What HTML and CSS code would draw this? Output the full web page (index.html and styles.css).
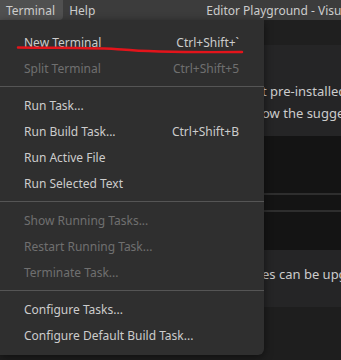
FILE: index.html
```html
<!DOCTYPE html>
<html lang="en">
<head>
  <meta charset="UTF-8" />
  <meta name="viewport" content="width=device-width, initial-scale=1.0" />
  <title>Editor Playground</title>
  <link rel="stylesheet" href="styles.css">
</head>
<body>
  <header class="titlebar">
    <nav class="menubar">
      <span class="menubar-item active">Terminal</span>
      <span class="menubar-item">Help</span>
    </nav>
    <span class="window-title">Editor Playground - Visual Studio Code</span>
  </header>

  <main class="editor">
    <div class="band band-top"></div>
    <section class="band band-panel panel-intro">
      <p class="line">t pre-installed.</p>
      <p class="line">ow the suggestions</p>
    </section>
    <div class="band band-dark band-a"></div>
    <div class="band band-rule"></div>
    <div class="band band-dark band-b"></div>
    <div class="band band-rule"></div>
    <div class="band band-dark band-c"></div>
    <section class="band band-panel panel-outro">
      <p class="line">es can be upgraded</p>
    </section>
    <div class="band band-bottom"></div>
  </main>

  <!-- dropdown of the Terminal menu, lies over the editor -->
  <div class="menu">
    <div class="menu-item">
      <span class="label">New Terminal</span><span class="keys">Ctrl+Shift+`</span>
    </div>
    <div class="menu-item disabled">
      <span class="label">Split Terminal</span><span class="keys">Ctrl+Shift+5</span>
    </div>
    <div class="separator"></div>
    <div class="menu-item"><span class="label">Run Task...</span></div>
    <div class="menu-item">
      <span class="label">Run Build Task...</span><span class="keys">Ctrl+Shift+B</span>
    </div>
    <div class="menu-item"><span class="label">Run Active File</span></div>
    <div class="menu-item"><span class="label">Run Selected Text</span></div>
    <div class="separator"></div>
    <div class="menu-item disabled"><span class="label">Show Running Tasks...</span></div>
    <div class="menu-item disabled"><span class="label">Restart Running Task...</span></div>
    <div class="menu-item disabled"><span class="label">Terminate Task...</span></div>
    <div class="separator"></div>
    <div class="menu-item"><span class="label">Configure Tasks...</span></div>
    <div class="menu-item"><span class="label">Configure Default Build Task...</span></div>

    <svg class="scribble" width="250" height="14" viewBox="0 0 250 14">
      <path d="M18 3.5 C 60 4, 100 3.5, 122 5.5 S 180 8.5, 242 8" fill="none" stroke="#e3141b" stroke-width="2.4" stroke-linecap="round"/>
    </svg>
  </div>
</body>
</html>
```

FILE: styles.css
```css
body {
  margin: 0;
  width: 341px;
  height: 360px;
  overflow: hidden;
  font-family: "Noto Sans", "Open Sans", sans-serif;
  background-color: #1e1e1e;
  color: #cccccc;
  position: relative;
}

.titlebar {
  height: 20px;
  background-color: #3c3c3c;
  display: flex;
  align-items: center;
  font-size: 12px;
  white-space: nowrap;
  overflow: hidden;
}

.menubar {
  display: flex;
  height: 100%;
}

.menubar-item {
  display: flex;
  align-items: center;
  padding: 0 8px 0 6px;
  color: #cccccc;
}

.menubar-item.active {
  background-color: #505050;
  border-bottom-right-radius: 4px;
}

.window-title {
  margin-left: 103px;
  color: #cccccc;
  overflow: hidden;
}

.editor {
  display: flex;
  flex-direction: column;
}

.band-top { height: 25px; background-color: #1f1f1f; }
.band-panel { background-color: #252526; }
.panel-intro { height: 91px; padding-top: 35px; box-sizing: border-box; }
.band-dark { background-color: #141414; }
.band-a { height: 57px; }
.band-b { height: 15px; }
.band-c { height: 38px; }
.band-rule { height: 2px; background-color: #2e2e2e; }
.panel-outro { height: 57px; padding-top: 13px; box-sizing: border-box; }
.band-bottom { flex: 1; background-color: #1e1e1e; }

.line {
  margin: 0;
  padding-left: 262px;
  font-size: 13px;
  line-height: 22px;
  white-space: nowrap;
  overflow: hidden;
  color: #cccccc;
}

.menu {
  position: absolute;
  top: 20px;
  left: 0;
  width: 264px;
  padding: 9px 0 7px;
  box-sizing: border-box;
  background-color: #2f2f2f;
  border-bottom-right-radius: 6px;
  box-shadow: 0 2px 8px rgba(0, 0, 0, 0.5);
  font-size: 12px;
}

.menu-item {
  height: 26px;
  display: flex;
  align-items: center;
  justify-content: space-between;
  padding: 0 25px 0 24px;
  color: #cccccc;
  white-space: nowrap;
}

.menu-item.disabled {
  color: #6f6f6f;
}

.separator {
  height: 1px;
  margin: 5px 0;
  background-color: #555555;
}

.scribble {
  position: absolute;
  top: 24px;
  left: 0;
}
```
